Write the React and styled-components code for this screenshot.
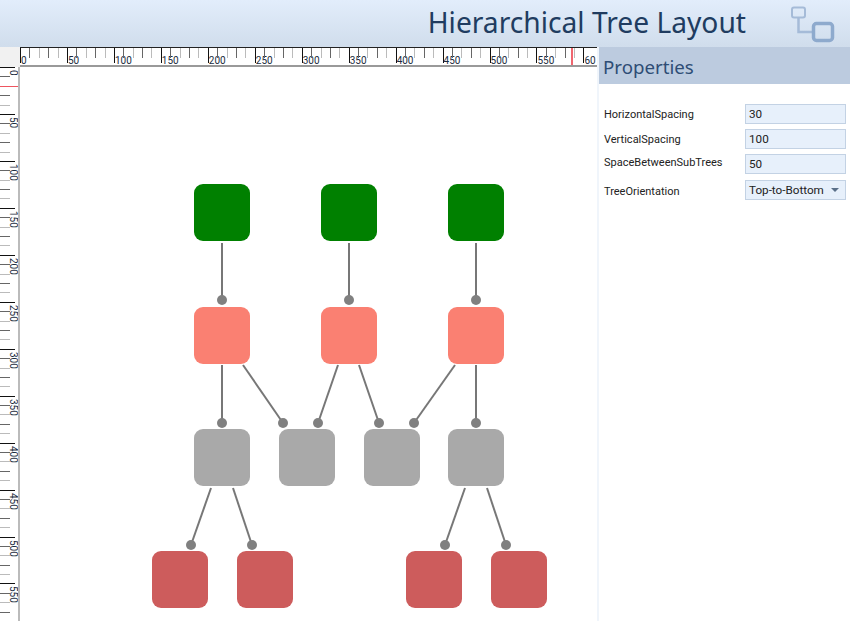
import React from "react";
import styled, { createGlobalStyle } from "styled-components";

const GlobalStyle = createGlobalStyle`
    html, body {
        margin: 0;
        padding: 0;
        background: white;
        font-family: "Noto Sans", "Open Sans", sans-serif;
    }
`;
const Page = styled.div`
    width: 850px;
    height: 621px;
    display: flex;
    flex-direction: column;
    overflow: hidden;
`;
const Header = styled.header`
    height: 47px;
    flex: none;
    display: flex;
    align-items: center;
    justify-content: flex-end;
    padding-right: 14px;
    box-sizing: border-box;
    background: linear-gradient(#e2edfb, #d0ddec);
`;
const Title = styled.h1`
    margin: 0 44px 3px 0;
    font-size: 28.2px;
    font-weight: 400;
    color: #203c60;
`;
const Body = styled.div`
    flex: 1;
    display: flex;
    min-height: 0;
`;
const Workspace = styled.div`
    width: 597px;
    flex: none;
    display: grid;
    grid-template-columns: 20px 577px;
    grid-template-rows: 20px 554px;
`;
const Corner = styled.div`
    background: #f1f1f1;
`;
const HRuler = styled.div`
    position: relative;
    display: flex;
    overflow: hidden;
    box-sizing: border-box;
    background: white;
    border-top: 1px solid #222;
    border-bottom: 2px solid #999;
`;
const VRuler = styled.div`
    position: relative;
    display: flex;
    flex-direction: column;
    overflow: hidden;
    box-sizing: border-box;
    background: white;
    border-right: 2px solid #bbb;
`;
const HCell = styled.div`
    position: relative;
    flex: 0 0 9.4px;
    height: ${p => (p.$major ? 15 : 10)}px;
    box-sizing: border-box;
    border-left: 1px solid ${p => p.$color};
`;
const VCell = styled.div`
    position: relative;
    flex: 0 0 9.4px;
    width: ${p => (p.$major ? 15 : 10)}px;
    box-sizing: border-box;
    border-top: 1px solid ${p => p.$color};
`;
const HLabel = styled.span`
    position: absolute;
    top: 8px;
    left: 0;
    font-family: Roboto, sans-serif;
    font-size: 10px;
    line-height: 9px;
    color: #1b2c40;
`;
const VLabel = styled.span`
    position: absolute;
    top: 2px;
    left: 9px;
    writing-mode: vertical-rl;
    font-family: Roboto, sans-serif;
    font-size: 10px;
    line-height: 9px;
    color: #1b2c40;
`;
// mouse position markers that lie over the rulers
const HMarker = styled.div`
    position: absolute;
    top: 0;
    bottom: 0;
    left: ${p => p.$at}px;
    width: 2px;
    background: #f0666f;
`;
const VMarker = styled.div`
    position: absolute;
    left: 0;
    right: 0;
    top: ${p => p.$at}px;
    height: 1px;
    background: #ee5560;
`;
const Canvas = styled.div`
    position: relative;
    background: white;
    overflow: hidden;
`;
const Wires = styled.svg`
    position: absolute;
    inset: 0;
`;
const Node = styled.div`
    position: absolute;
    left: ${p => p.$x}px;
    top: ${p => p.$y}px;
    width: 56px;
    height: 57px;
    border-radius: 9px;
    background: ${p => p.$color};
`;
const Panel = styled.aside`
    flex: 1;
    background: white;
    border-left: 2px solid #f0f5fb;
`;
const PanelTitle = styled.h2`
    margin: 0;
    height: 37px;
    padding-left: 4px;
    font-size: 18.7px;
    font-weight: 400;
    line-height: 40px;
    color: #2e4d75;
    background: #bccbdf;
`;
const Fields = styled.div`
    display: grid;
    grid-template-columns: 141px 101px;
    grid-auto-rows: 20px;
    row-gap: 5px;
    padding: 20px 0 0 5px;
    align-items: center;
`;
const FieldLabel = styled.label`
    font-family: Roboto, sans-serif;
    font-size: 11px;
    color: #222;
    position: relative;
    top: ${p => p.$shift || 0}px;
`;
const FieldBox = styled.div`
    height: 20px;
    box-sizing: border-box;
    padding-left: 3px;
    font-family: Roboto, sans-serif;
    font-size: 11.7px;
    line-height: 18px;
    color: #222;
    display: flex;
    align-items: center;
    justify-content: space-between;
    background: #e7f0fb;
    border: 1px solid #c3d2e4;
    margin-top: ${p => p.$shift || 0}px;
`;
const Arrow = styled.span`
    width: 0;
    height: 0;
    margin-right: 6px;
    border-left: 4px solid transparent;
    border-right: 4px solid transparent;
    border-top: 4px solid #5a6f88;
`;

const NODE_ROWS = [
    { y: 117, color: "#008000", xs: [174, 301, 428] },
    { y: 240, color: "#fa8072", xs: [174, 301, 428] },
    { y: 362, color: "#a9a9a9", xs: [174, 259, 344, 428] },
    { y: 484, color: "#cd5c5c", xs: [132, 217, 386, 471] },
];

// x1, y1, x2, y2 in canvas coordinates
const LINKS = [
    [202, 176, 202, 233],
    [329, 176, 329, 233],
    [456, 176, 456, 233],
    [202, 298, 202, 356],
    [223, 298, 263, 356],
    [318, 298, 298, 356],
    [339, 298, 359, 356],
    [435, 298, 394, 356],
    [456, 298, 456, 356],
    [191, 421, 171, 478],
    [213, 421, 232, 478],
    [445, 421, 425, 478],
    [467, 421, 486, 478],
];

const FIELDS = [
    { label: "HorizontalSpacing", value: "30" },
    { label: "VerticalSpacing", value: "100" },
    { label: "SpaceBetweenSubTrees", value: "50", labelShift: -2 },
    { label: "TreeOrientation", value: "Top-to-Bottom", select: true, shift: 2, labelShift: 2 },
];

function tickColor(i) {
    if (i % 5 === 0) return "#111";
    return i % 5 % 2 === 1 ? "#666" : "#bbb";
}

function LogoIcon() {
    return (
        <svg width="46" height="40" viewBox="0 0 46 40" fill="none" style={{ marginTop: 1 }}>
            <rect x="2" y="3.5" width="13" height="10" rx="2" stroke="#a5bbd8" strokeWidth="2" />
            <path d="M8.5 14V28H23" stroke="#a5bbd8" strokeWidth="2.5" />
            <rect x="23.5" y="19.5" width="19" height="17" rx="3" stroke="#8eaacd" strokeWidth="3.5" />
        </svg>
    );
}

function App() {
    const hTicks = Array.from({ length: 61 }, (_, i) => i);
    const vTicks = Array.from({ length: 60 }, (_, i) => i);

    return (
        <Page>
            <GlobalStyle />
            <Header>
                <Title>Hierarchical Tree Layout</Title>
                <LogoIcon />
            </Header>
            <Body>
                <Workspace>
                    <Corner />
                    <HRuler>
                        {hTicks.map(i => (
                            <HCell key={i} $major={i % 5 === 0} $color={tickColor(i)}>
                                {i % 5 === 0 && <HLabel>{i === 60 ? 60 : i * 10}</HLabel>}
                            </HCell>
                        ))}
                        <HMarker $at={551} />
                    </HRuler>
                    <VRuler>
                        {vTicks.map(i => (
                            <VCell key={i} $major={i % 5 === 0} $color={tickColor(i)}>
                                {i % 5 === 0 && <VLabel>{i * 10}</VLabel>}
                            </VCell>
                        ))}
                        <VMarker $at={19} />
                    </VRuler>
                    <Canvas>
                        <Wires width="577" height="554">
                            {LINKS.map(([x1, y1, x2, y2]) => (
                                <g key={`${x1}-${y1}-${x2}`}>
                                    <line x1={x1} y1={y1} x2={x2} y2={y2} stroke="#777" strokeWidth="2" />
                                    <circle cx={x2} cy={y2} r="5" fill="#808080" />
                                </g>
                            ))}
                        </Wires>
                        {NODE_ROWS.map(row =>
                            row.xs.map(x => <Node key={`${x}-${row.y}`} $x={x} $y={row.y} $color={row.color} />)
                        )}
                    </Canvas>
                </Workspace>
                <Panel>
                    <PanelTitle>Properties</PanelTitle>
                    <Fields>
                        {FIELDS.map(f => (
                            <React.Fragment key={f.label}>
                                <FieldLabel $shift={f.labelShift}>{f.label}</FieldLabel>
                                <FieldBox $shift={f.shift}>
                                    {f.value}
                                    {f.select && <Arrow />}
                                </FieldBox>
                            </React.Fragment>
                        ))}
                    </Fields>
                </Panel>
            </Body>
        </Page>
    );
}

export default App;
